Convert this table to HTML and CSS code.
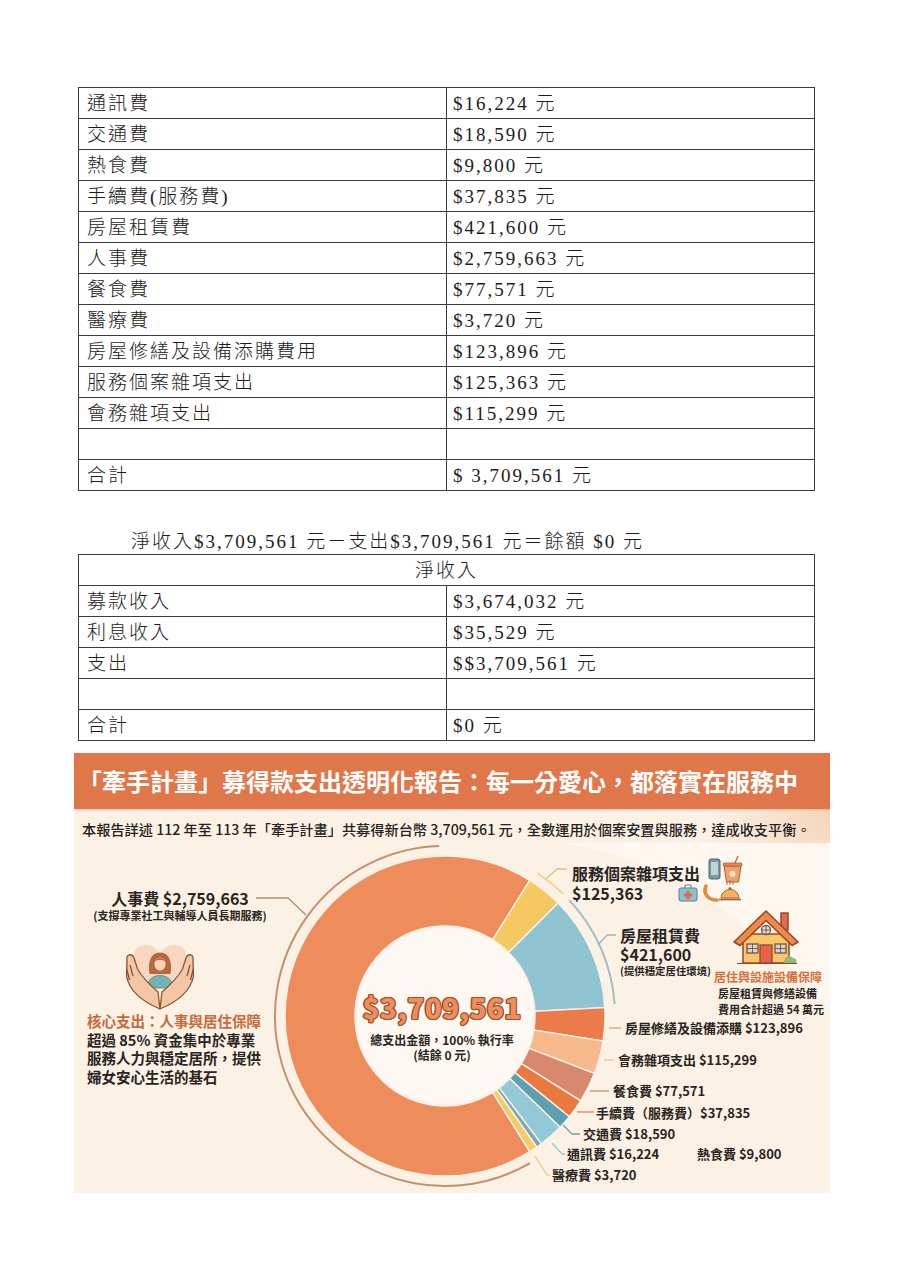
FILE: index.html
```html
<!DOCTYPE html>
<html lang="zh-Hant">
<head>
<meta charset="utf-8">
<title>牽手計畫 募得款支出報告</title>
<link rel="stylesheet" href="styles.css">
</head>
<body>
<div class="page">
  <table class="doc-table">
    <colgroup><col class="c1"><col class="c2"></colgroup>
    <tr><td>通訊費</td><td class="v">$16,224 元</td></tr>
    <tr><td>交通費</td><td class="v">$18,590 元</td></tr>
    <tr><td>熱食費</td><td class="v">$9,800 元</td></tr>
    <tr><td>手續費(服務費)</td><td class="v">$37,835 元</td></tr>
    <tr><td>房屋租賃費</td><td class="v">$421,600 元</td></tr>
    <tr><td>人事費</td><td class="v">$2,759,663 元</td></tr>
    <tr><td>餐食費</td><td class="v">$77,571 元</td></tr>
    <tr><td>醫療費</td><td class="v">$3,720 元</td></tr>
    <tr><td>房屋修繕及設備添購費用</td><td class="v">$123,896 元</td></tr>
    <tr><td>服務個案雜項支出</td><td class="v">$125,363 元</td></tr>
    <tr><td>會務雜項支出</td><td class="v">$115,299 元</td></tr>
    <tr><td></td><td class="v"></td></tr>
    <tr><td>合計</td><td class="v">$ 3,709,561 元</td></tr>
  </table>

  <p class="equation">淨收入$3,709,561 元－支出$3,709,561 元＝餘額 $0 元</p>

  <table class="doc-table">
    <colgroup><col class="c1"><col class="c2"></colgroup>
    <tr><td colspan="2" class="head">淨收入</td></tr>
    <tr><td>募款收入</td><td class="v">$3,674,032 元</td></tr>
    <tr><td>利息收入</td><td class="v">$35,529 元</td></tr>
    <tr><td>支出</td><td class="v">$$3,709,561 元</td></tr>
    <tr><td></td><td class="v"></td></tr>
    <tr><td>合計</td><td class="v">$0 元</td></tr>
  </table>

  <section class="info">
    <h1 class="info-title">「牽手計畫」募得款支出透明化報告：每一分愛心，都落實在服務中</h1>
    <p class="info-sub">本報告詳述 112 年至 113 年「牽手計畫」共募得新台幣 3,709,561 元，全數運用於個案安置與服務，達成收支平衡。</p>
    <div class="info-body">
      <svg class="chart" width="756" height="350" viewBox="74 842 756 350" xmlns="http://www.w3.org/2000/svg">
        <path class="bg-light" d="M560 842 C 680 860 760 930 830 1010 L 830 842 Z"/>

        <!-- outer decorative arcs -->
        <path class="arc arc-brown" d="M530 1162.2 A 170 170 0 1 1 439.1 845.1"/>
        <path class="arc arc-yellow" d="M537.6 872.4 A 170 170 0 0 1 563.1 892.7"/>
        <path class="arc arc-blue" d="M569.3 899.1 A 170 170 0 0 1 614.6 1003.1"/>

        <!-- donut -->
        <g class="donut">
          <path fill="#ef8c5b" d="M529.8 1150.7 A 160 160 0 1 1 529.8 879.3 L 492.7 938.7 A 90 90 0 1 0 492.7 1091.3 Z"/>
          <path fill="#f6c862" d="M529.8 879.3 A 160 160 0 0 1 558.1 901.9 L 508.6 951.4 A 90 90 0 0 0 492.7 938.7 Z"/>
          <path fill="#8fc4d0" d="M558.1 901.9 A 160 160 0 0 1 604.8 1006.6 L 534.9 1010.3 A 90 90 0 0 0 508.6 951.4 Z"/>
          <path fill="#ec7b4c" d="M604.8 1006.6 A 160 160 0 0 1 603.0 1040.0 L 533.9 1029.1 A 90 90 0 0 0 534.9 1010.3 Z"/>
          <path fill="#f6b98b" d="M603.0 1040.0 A 160 160 0 0 1 594.4 1072.3 L 529.0 1047.3 A 90 90 0 0 0 533.9 1029.1 Z"/>
          <path fill="#d8896d" d="M594.4 1072.3 A 160 160 0 0 1 580.7 1099.8 L 521.3 1062.7 A 90 90 0 0 0 529.0 1047.3 Z"/>
          <path fill="#ea793f" d="M580.7 1099.8 A 160 160 0 0 1 569.3 1115.7 L 514.9 1071.6 A 90 90 0 0 0 521.3 1062.7 Z"/>
          <path fill="#5f9fb2" d="M569.3 1115.7 A 160 160 0 0 1 560.1 1126.2 L 509.7 1077.5 A 90 90 0 0 0 514.9 1071.6 Z"/>
          <path fill="#93c9d7" d="M560.1 1126.2 A 160 160 0 0 1 541.3 1142.8 L 499.2 1086.9 A 90 90 0 0 0 509.7 1077.5 Z"/>
          <path fill="#7ea9b1" d="M541.3 1142.8 A 160 160 0 0 1 536.8 1146.1 L 496.6 1088.7 A 90 90 0 0 0 499.2 1086.9 Z"/>
          <path fill="#f2cd6b" d="M536.8 1146.1 A 160 160 0 0 1 529.8 1150.7 L 492.7 1091.3 A 90 90 0 0 0 496.6 1088.7 Z"/>
        </g>
        <circle class="hole" cx="445" cy="1015" r="89"/>

        <!-- leader lines -->
        <polyline class="lead" stroke="#b88f74" points="256,897 288,897 306,914"/>
        <polyline class="lead" stroke="#e3c37a" points="546,878 557,868 567,868"/>
        <polyline class="lead" stroke="#9db8bf" points="598,944 607,934 616,934"/>
        <polyline class="lead" stroke="#e9956a" points="609,1027 621,1027"/>
        <polyline class="lead" stroke="#f0c09a" points="604,1059 614,1059"/>
        <polyline class="lead" stroke="#c98a72" points="590,1090 609,1090"/>
        <polyline class="lead" stroke="#e3864f" points="577,1111 594,1111"/>
        <polyline class="lead" stroke="#6a9fb0" points="563,1124 572,1133 580,1133"/>
        <polyline class="lead" stroke="#9ccbd6" points="552,1142 562,1153 565,1153"/>
        <polyline class="lead" stroke="#ebcf7a" points="535,1155 547,1174 550,1174"/>

        <!-- hands with woman icon -->
        <g class="icon-care">
          <path fill="#f8d6c0" d="M160 988 C 127 967 129 944 146 944 C 153 944 158 949 160 953 C 162 949 167 944 174 944 C 191 944 193 967 160 988 Z"/>
          <path fill="#b9673f" d="M149.5 973 C 147.5 960 151 951.5 160 951.5 C 169 951.5 172.5 960 170.5 973 Z"/>
          <ellipse fill="#f8d2b4" cx="160" cy="963" rx="5.6" ry="6.6"/>
          <path fill="#b9673f" d="M154.2 961 C 155 955.5 165 955.5 165.8 961 C 163 958 157 958 154.2 961 Z"/>
          <path fill="#72b3b5" stroke="#4d8a8c" stroke-width="0.8" d="M147.5 987 C 147.5 979 152 974.5 160 974.5 C 168 974.5 172.5 979 172.5 987 Z"/>
          <path id="hand" fill="#f4c6a4" stroke="#8a5436" stroke-width="1.3" stroke-linejoin="round" d="M127 959 C 126 953 132 952 134 957 L 137.5 968 C 142 976 150 984 158 991 L 160 1008 C 141 1000 129 989 126.5 975 Z M 130 964 L 133 975 M 126.8 968 L 129.5 979"/>
          <use href="#hand" transform="translate(320 0) scale(-1 1)"/>
        </g>

        <!-- service icons -->
        <g class="icon-service">
          <rect x="709" y="858" width="11" height="20" rx="2" fill="#7d97a3" stroke="#4f6470"/>
          <rect x="711" y="861" width="7" height="13" fill="#bcd3db"/>
          <path d="M724 865 L741 865 L738.5 881 L726.5 881 Z" fill="#f2a16d" stroke="#a95f38"/>
          <rect x="723" y="862" width="19" height="3" rx="1" fill="#e7895a" stroke="#a95f38" stroke-width="0.8"/>
          <line x1="735" y1="862" x2="738" y2="855" stroke="#a95f38" stroke-width="1.2"/>
          <circle cx="732.5" cy="873" r="3" fill="#fbe3cf"/>
          <rect x="679" y="887" width="18" height="13" rx="2" fill="#8cc0cc" stroke="#56818d"/>
          <path d="M685 887 V 884 H 691 V 887" fill="none" stroke="#56818d"/>
          <path d="M686.5 890 h3 v2.5 h2.5 v3 h-2.5 v2.5 h-3 v-2.5 h-2.5 v-3 h2.5 z" fill="#e8614b"/>
          <path d="M706 885 C 702.5 893 709 899.5 717 899" fill="none" stroke="#e58a3c" stroke-width="3.6" stroke-linecap="round"/>
          <path d="M721 897 A 9 8.5 0 0 1 739 897 Z" fill="#f3b25f" stroke="#a8683a"/>
          <line x1="719" y1="898.5" x2="741" y2="898.5" stroke="#a8683a" stroke-width="1.8"/>
          <circle cx="730" cy="887.5" r="1.6" fill="#a8683a"/>
          <path d="M727 884 v-4 M730 884 v-5 M733 884 v-4" stroke="#a8683a" stroke-width="0.9"/>
        </g>

        <!-- house icon -->
        <g class="icon-house">
          <rect x="781" y="912" width="7" height="17" fill="#e36b4a" stroke="#8f4a2c" stroke-width="1.5"/>
          <rect x="743" y="933" width="46" height="29" fill="#f8c66c" stroke="#8f4a2c" stroke-width="1.5"/>
          <path d="M734 941 L766 910 L798 941 L792 944.5 L766 919.5 L740 944.5 Z" fill="#ef8a4b" stroke="#8f4a2c" stroke-width="1.6" stroke-linejoin="round"/>
          <circle cx="766" cy="929" r="4.5" fill="#cfe5ec" stroke="#8f4a2c" stroke-width="1.3"/>
          <path d="M766 924.5 V 933.5 M761.5 929 H 770.5" stroke="#8f4a2c" stroke-width="0.9"/>
          <rect x="747" y="943" width="11" height="9" fill="#bcdde6" stroke="#8f4a2c" stroke-width="1.3"/>
          <rect x="775" y="943" width="11" height="9" fill="#bcdde6" stroke="#8f4a2c" stroke-width="1.3"/>
          <path d="M752.5 943 V 952 M747 947.5 H 758 M780.5 943 V 952 M775 947.5 H 786" stroke="#8f4a2c" stroke-width="0.9"/>
          <rect x="760" y="944" width="12" height="18" fill="#e6634a" stroke="#8f4a2c" stroke-width="1.3"/>
          <path d="M784 962 C 784 955 790 953 793 957 C 797 957 797 962 796 962 Z" fill="#92ba74"/>
          <line x1="737" y1="962.5" x2="797" y2="962.5" stroke="#8f4a2c" stroke-width="1.2"/>
        </g>
      </svg>

      <div class="callout co-staff">
        <div class="big">人事費 $2,759,663</div>
        <div class="note">(支撐專業社工與輔導人員長期服務)</div>
      </div>

      <div class="callout co-core">
        <div class="accent">核心支出：人事與居住保障</div>
        <div>超過 85% 資金集中於專業</div>
        <div>服務人力與穩定居所，提供</div>
        <div>婦女安心生活的基石</div>
      </div>

      <div class="callout co-service big">
        <div>服務個案雜項支出</div>
        <div>$125,363</div>
      </div>

      <div class="callout co-rent">
        <div class="big tight">房屋租賃費</div>
        <div class="big tight">$421,600</div>
        <div class="note small-note">(提供穩定居住環境)</div>
      </div>

      <div class="callout co-house">
        <div class="house-head">居住與設施設備保障</div>
        <div class="house-line">房屋租賃與修繕設備</div>
        <div class="house-line">費用合計超過 54 萬元</div>
      </div>

      <div class="callout small co-repair">房屋修繕及設備添購 $123,896</div>
      <div class="callout small co-misc">會務雜項支出 $115,299</div>
      <div class="callout small co-meal">餐食費 $77,571</div>
      <div class="callout small co-fee">手續費（服務費）$37,835</div>
      <div class="callout small co-transit">交通費 $18,590</div>
      <div class="callout small co-phone">通訊費 $16,224</div>
      <div class="callout small co-hot">熱食費 $9,800</div>
      <div class="callout small co-med">醫療費 $3,720</div>

      <div class="callout co-total">
        <div class="total-num">$3,709,561</div>
        <div class="total-cap">總支出金額，100% 執行率<br>(結餘 0 元)</div>
      </div>
    </div>
  </section>
</div>
</body>
</html>
```

FILE: styles.css
```css
html, body {
  margin: 0;
  padding: 0;
  background: #ffffff;
}

.page {
  width: 904px;
  padding: 87px 0 0 78px;
  box-sizing: border-box;
}

/* ---------- document tables ---------- */
.doc-table {
  border-collapse: collapse;
  table-layout: fixed;
  width: 737px;
  font-family: "Liberation Serif", "Noto Sans CJK TC", serif;
  font-size: 19px;
  font-weight: 300;
  letter-spacing: 2px;
  color: #1c1c1c;
}

.doc-table .c1,
.doc-table .c2 {
  width: 368px;
}

.doc-table td {
  border: 1px solid #3c3c3c;
  height: 29px;
  padding: 1px 0 0 8px;
  line-height: 1;
  vertical-align: middle;
  white-space: nowrap;
}

.doc-table td.v {
  padding-left: 6px;
}

.doc-table td.head {
  text-align: center;
  padding-left: 0;
}

.equation {
  margin: 39px 0 0 53px;
  height: 24px;
  line-height: 24px;
  font-family: "Liberation Serif", "Noto Sans CJK TC", serif;
  font-size: 19px;
  font-weight: 300;
  letter-spacing: 2px;
  color: #1c1c1c;
  white-space: nowrap;
}

/* ---------- infographic ---------- */
.info {
  margin: 12px 0 0 -4px;
  width: 756px;
  height: 440px;
  background:
    radial-gradient(circle at 100% 62px, #f6d5ba 0, rgba(251, 241, 229, 0) 120px),
    #fbf1e5;
  font-family: "Noto Sans CJK TC", "Noto Sans", sans-serif;
  overflow: hidden;
}

.info-title {
  margin: 0;
  height: 56px;
  padding-left: 4px;
  background: #df774a;
  color: #ffffff;
  font-size: 24px;
  font-weight: 700;
  line-height: 56px;
  white-space: nowrap;
  box-shadow: 0 1px 2px rgba(150, 80, 40, 0.25);
}

.info-sub {
  margin: 0;
  padding: 10px 0 0 8px;
  height: 24px;
  line-height: 20px;
  font-size: 14.2px;
  font-weight: 500;
  color: #262220;
  white-space: nowrap;
}

.info-body {
  position: relative;
  height: 350px;
}

.chart {
  position: absolute;
  left: 0;
  top: 0;
  display: block;
}

.bg-light {
  fill: #fdf7f0;
}

.arc {
  fill: none;
  stroke-width: 2;
}

.arc-brown { stroke: #c4906e; }
.arc-yellow { stroke: #efd596; }
.arc-blue { stroke: #a2bcc2; }

.donut path {
  stroke: #fbf2e6;
  stroke-width: 1.4;
}

.hole {
  fill: #fdf8f1;
}

.lead {
  fill: none;
  stroke-width: 1.3;
}

/* ---------- callouts ---------- */
.callout {
  position: absolute;
  font-weight: 700;
  color: #2a2522;
  white-space: nowrap;
}

.big {
  font-size: 16px;
  line-height: 20px;
}

.big.tight {
  line-height: 19px;
}

.note {
  font-size: 11px;
  line-height: 14px;
}

.note.small-note {
  font-size: 10.4px;
}

.small {
  font-size: 13px;
  line-height: 16px;
}

.co-staff {
  left: 14px;
  top: 45px;
  width: 184px;
  text-align: center;
}

.co-core {
  left: 13px;
  top: 169px;
  font-size: 14.5px;
  line-height: 18.5px;
}

.co-core .accent {
  color: #c8693a;
}

.co-service {
  left: 498px;
  top: 20px;
}

.co-rent {
  left: 546px;
  top: 83px;
}

.co-house {
  left: 640px;
  top: 125px;
}

.house-head {
  font-size: 12px;
  line-height: 17px;
  color: #d46f37;
}

.house-line {
  font-size: 11px;
  line-height: 16px;
  padding-left: 4px;
}

.co-repair { left: 551px; top: 177px; }
.co-misc { left: 544px; top: 209px; }
.co-meal { left: 539px; top: 240px; }
.co-fee { left: 522px; top: 262px; }
.co-transit { left: 509px; top: 283px; }
.co-phone { left: 493px; top: 303px; }
.co-hot { left: 623px; top: 303px; }
.co-med { left: 478px; top: 324px; }

.co-total {
  left: 268px;
  top: 147px;
  width: 200px;
  text-align: center;
}

.total-num {
  font-size: 28px;
  line-height: 34px;
  font-weight: 900;
  color: #f08d5d;
  letter-spacing: 0.3px;
  text-shadow:
    1.2px 0 0 #9e5029, -1.2px 0 0 #9e5029, 0 1.2px 0 #9e5029, 0 -1.2px 0 #9e5029,
    0.9px 0.9px 0 #9e5029, -0.9px 0.9px 0 #9e5029, 0.9px -0.9px 0 #9e5029, -0.9px -0.9px 0 #9e5029;
}

.total-cap {
  margin-top: 8px;
  font-size: 12px;
  line-height: 15px;
  color: #2a2522;
}
```
